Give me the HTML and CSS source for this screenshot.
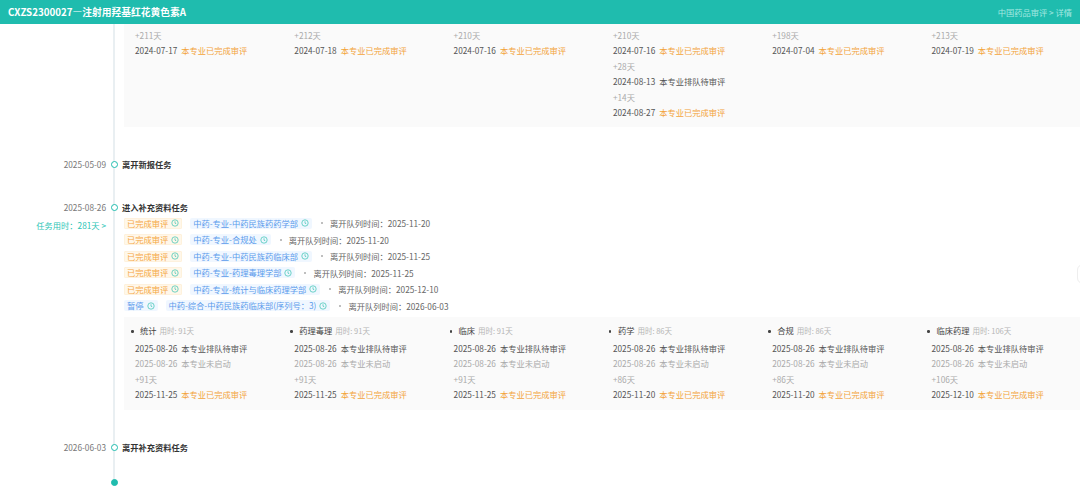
FILE: index.html
```html
<!DOCTYPE html>
<html lang="zh-CN">
<head>
    <meta charset="UTF-8">
    <title>CXZS2300027—注射用羟基红花黄色素A</title>
    <link rel="stylesheet" href="styles.css">
</head>
<body>
    <div class="header">
        <span class="headerTitle">CXZS2300027—注射用羟基红花黄色素A</span>
        <span class="headerNav">中国药品审评 &gt; 详情</span>
    </div>

    <div class="timeline">
        <div class="row">
            <div class="side"></div>
            <div class="main">
                <div class="panel panelTop">
                    <div class="col">
                        <div class="line muted">+211天</div>
                        <div class="line">2024-07-17<span class="state done">本专业已完成审评</span></div>
                    </div>
                    <div class="col">
                        <div class="line muted">+212天</div>
                        <div class="line">2024-07-18<span class="state done">本专业已完成审评</span></div>
                    </div>
                    <div class="col">
                        <div class="line muted">+210天</div>
                        <div class="line">2024-07-16<span class="state done">本专业已完成审评</span></div>
                    </div>
                    <div class="col">
                        <div class="line muted">+210天</div>
                        <div class="line">2024-07-16<span class="state done">本专业已完成审评</span></div>
                        <div class="line muted">+28天</div>
                        <div class="line">2024-08-13<span class="state">本专业排队待审评</span></div>
                        <div class="line muted">+14天</div>
                        <div class="line">2024-08-27<span class="state done">本专业已完成审评</span></div>
                    </div>
                    <div class="col">
                        <div class="line muted">+198天</div>
                        <div class="line">2024-07-04<span class="state done">本专业已完成审评</span></div>
                    </div>
                    <div class="col">
                        <div class="line muted">+213天</div>
                        <div class="line">2024-07-19<span class="state done">本专业已完成审评</span></div>
                    </div>
                </div>
            </div>
        </div>

        <div class="row event eventFirst">
            <div class="side">2025-05-09</div>
            <div class="main"><span class="dot"></span><b>离开新报任务</b></div>
        </div>

        <div class="row event eventSecond">
            <div class="side">2025-08-26</div>
            <div class="main"><span class="dot"></span><b>进入补充资料任务</b></div>
        </div>

        <div class="row">
            <div class="side usedTime">任务用时：281天 &gt;</div>
            <div class="main">
                <div class="tagRow">
                    <span class="tag orange">已完成审评<svg class="clock" viewBox="0 0 12 12"><circle cx="6" cy="6" r="4.8"/><path d="M6 3.4V6.3L7.9 7.2"/></svg></span>
                    <span class="tag blue">中药-专业-中药民族药药学部<svg class="clock" viewBox="0 0 12 12"><circle cx="6" cy="6" r="4.8"/><path d="M6 3.4V6.3L7.9 7.2"/></svg></span>
                    <span class="sep"></span><span class="leave">离开队列时间：2025-11-20</span>
                </div>
                <div class="tagRow">
                    <span class="tag orange">已完成审评<svg class="clock" viewBox="0 0 12 12"><circle cx="6" cy="6" r="4.8"/><path d="M6 3.4V6.3L7.9 7.2"/></svg></span>
                    <span class="tag blue">中药-专业-合规处<svg class="clock" viewBox="0 0 12 12"><circle cx="6" cy="6" r="4.8"/><path d="M6 3.4V6.3L7.9 7.2"/></svg></span>
                    <span class="sep"></span><span class="leave">离开队列时间：2025-11-20</span>
                </div>
                <div class="tagRow">
                    <span class="tag orange">已完成审评<svg class="clock" viewBox="0 0 12 12"><circle cx="6" cy="6" r="4.8"/><path d="M6 3.4V6.3L7.9 7.2"/></svg></span>
                    <span class="tag blue">中药-专业-中药民族药临床部<svg class="clock" viewBox="0 0 12 12"><circle cx="6" cy="6" r="4.8"/><path d="M6 3.4V6.3L7.9 7.2"/></svg></span>
                    <span class="sep"></span><span class="leave">离开队列时间：2025-11-25</span>
                </div>
                <div class="tagRow">
                    <span class="tag orange">已完成审评<svg class="clock" viewBox="0 0 12 12"><circle cx="6" cy="6" r="4.8"/><path d="M6 3.4V6.3L7.9 7.2"/></svg></span>
                    <span class="tag blue">中药-专业-药理毒理学部<svg class="clock" viewBox="0 0 12 12"><circle cx="6" cy="6" r="4.8"/><path d="M6 3.4V6.3L7.9 7.2"/></svg></span>
                    <span class="sep"></span><span class="leave">离开队列时间：2025-11-25</span>
                </div>
                <div class="tagRow">
                    <span class="tag orange">已完成审评<svg class="clock" viewBox="0 0 12 12"><circle cx="6" cy="6" r="4.8"/><path d="M6 3.4V6.3L7.9 7.2"/></svg></span>
                    <span class="tag blue">中药-专业-统计与临床药理学部<svg class="clock" viewBox="0 0 12 12"><circle cx="6" cy="6" r="4.8"/><path d="M6 3.4V6.3L7.9 7.2"/></svg></span>
                    <span class="sep"></span><span class="leave">离开队列时间：2025-12-10</span>
                </div>
                <div class="tagRow">
                    <span class="tag blue">暂停<svg class="clock" viewBox="0 0 12 12"><circle cx="6" cy="6" r="4.8"/><path d="M6 3.4V6.3L7.9 7.2"/></svg></span>
                    <span class="tag blue">中药-综合-中药民族药临床部(序列号：3)<svg class="clock" viewBox="0 0 12 12"><circle cx="6" cy="6" r="4.8"/><path d="M6 3.4V6.3L7.9 7.2"/></svg></span>
                    <span class="sep"></span><span class="leave">离开队列时间：2026-06-03</span>
                </div>

                <div class="panel panelBottom">
                    <div class="col">
                        <div class="colTitle"><span class="bullet"></span>统计<small>用时: 91天</small></div>
                        <div class="line">2025-08-26<span class="state">本专业排队待审评</span></div>
                        <div class="line faded">2025-08-26<span class="state">本专业未启动</span></div>
                        <div class="line muted">+91天</div>
                        <div class="line">2025-11-25<span class="state done">本专业已完成审评</span></div>
                    </div>
                    <div class="col">
                        <div class="colTitle"><span class="bullet"></span>药理毒理<small>用时: 91天</small></div>
                        <div class="line">2025-08-26<span class="state">本专业排队待审评</span></div>
                        <div class="line faded">2025-08-26<span class="state">本专业未启动</span></div>
                        <div class="line muted">+91天</div>
                        <div class="line">2025-11-25<span class="state done">本专业已完成审评</span></div>
                    </div>
                    <div class="col">
                        <div class="colTitle"><span class="bullet"></span>临床<small>用时: 91天</small></div>
                        <div class="line">2025-08-26<span class="state">本专业排队待审评</span></div>
                        <div class="line faded">2025-08-26<span class="state">本专业未启动</span></div>
                        <div class="line muted">+91天</div>
                        <div class="line">2025-11-25<span class="state done">本专业已完成审评</span></div>
                    </div>
                    <div class="col">
                        <div class="colTitle"><span class="bullet"></span>药学<small>用时: 86天</small></div>
                        <div class="line">2025-08-26<span class="state">本专业排队待审评</span></div>
                        <div class="line faded">2025-08-26<span class="state">本专业未启动</span></div>
                        <div class="line muted">+86天</div>
                        <div class="line">2025-11-20<span class="state done">本专业已完成审评</span></div>
                    </div>
                    <div class="col">
                        <div class="colTitle"><span class="bullet"></span>合规<small>用时: 86天</small></div>
                        <div class="line">2025-08-26<span class="state">本专业排队待审评</span></div>
                        <div class="line faded">2025-08-26<span class="state">本专业未启动</span></div>
                        <div class="line muted">+86天</div>
                        <div class="line">2025-11-20<span class="state done">本专业已完成审评</span></div>
                    </div>
                    <div class="col">
                        <div class="colTitle"><span class="bullet"></span>临床药理<small>用时: 106天</small></div>
                        <div class="line">2025-08-26<span class="state">本专业排队待审评</span></div>
                        <div class="line faded">2025-08-26<span class="state">本专业未启动</span></div>
                        <div class="line muted">+106天</div>
                        <div class="line">2025-12-10<span class="state done">本专业已完成审评</span></div>
                    </div>
                </div>
            </div>
        </div>

        <div class="row event eventLast">
            <div class="side">2026-06-03</div>
            <div class="main"><span class="dot"></span><b>离开补充资料任务</b></div>
        </div>

        <div class="row endRow">
            <div class="side"></div>
            <div class="main"><span class="dot dotEnd"></span></div>
        </div>
    </div>

    <div class="edgeTab"></div>
</body>
</html>
```

FILE: styles.css
```css
html, body {
    margin: 0;
    padding: 0;
    height: 487px;
    overflow: hidden;
}
body {
    font-family: "Noto Sans CJK SC", "Noto Sans", sans-serif;
    font-size: 8.25px;
    color: #555;
    background: #fff;
}
.header {
    height: 24px;
    padding: 0 8px;
    display: flex;
    justify-content: space-between;
    align-items: center;
    background-color: #1fbcae;
}
.headerTitle {
    font-size: 9.75px;
    font-weight: 700;
    color: #fff;
}
.headerNav {
    font-size: 8.25px;
    color: #a5e8e1;
}
.timeline {
    position: relative;
}
.timeline::before {
    content: "";
    position: absolute;
    left: 113px;
    top: 0;
    height: 457px;
    width: 2px;
    background-color: #e9eff2;
}
.row {
    display: flex;
    position: relative;
}
.side {
    flex: 0 0 106px;
    text-align: right;
    line-height: 16px;
    color: #777;
}
.main {
    position: relative;
    margin-left: 18px;
    flex: 0 0 944px;
    line-height: 16px;
}
.event .main {
    margin-left: 16px;
    flex-basis: 946px;
}
.event b {
    font-weight: 700;
    color: #333;
}
.eventFirst {
    margin-top: 29px;
}
.eventSecond {
    margin-top: 27px;
}
.eventLast {
    margin-top: 29px;
}
.endRow {
    margin-top: 24px;
}
.dot {
    position: absolute;
    left: -11px;
    top: 4.5px;
    width: 7px;
    height: 7px;
    box-sizing: border-box;
    border: 1.5px solid #1fbcae;
    border-radius: 50%;
    background: #fff;
}
.dotEnd {
    top: 0;
    left: -13px;
    background: #1fbcae;
}
.usedTime {
    color: #2cc5b6;
    margin-top: 2px;
}
.panel {
    display: grid;
    grid-template-columns: repeat(6, 159.3px);
    padding-left: 11px;
    background-color: #fafafa;
    overflow: hidden;
}
.panelTop {
    height: 103px;
    box-sizing: border-box;
    padding-top: 3.5px;
}
.panelBottom {
    margin-top: 3px;
    height: 93px;
    box-sizing: border-box;
    padding-top: 5px;
}
.line {
    height: 15.5px;
    line-height: 15.5px;
    white-space: nowrap;
    color: #555;
}
.line.muted {
    color: #aaa;
}
.line.faded, .line.faded .state {
    color: #aaa;
}
.state {
    margin-left: 4px;
    color: #555;
}
.state.done {
    color: #f3a43b;
}
.colTitle {
    position: relative;
    height: 16px;
    line-height: 16px;
    margin-left: 4px;
    margin-bottom: 2.5px;
    white-space: nowrap;
    color: #444;
}
.colTitle small {
    margin-left: 3px;
    font-size: 7.5px;
    color: #b5b5b5;
}
.bullet {
    display: inline-block;
    width: 2.5px;
    height: 2.5px;
    margin: 0 6.5px 1px -8px;
    border-radius: 50%;
    vertical-align: middle;
    background-color: #444;
}
.tagRow {
    display: flex;
    align-items: center;
    height: 16.5px;
    white-space: nowrap;
}
.tag {
    display: inline-flex;
    align-items: center;
    height: 11px;
    padding: 0 3px;
    margin-right: 8px;
    border-radius: 2px;
    line-height: 11px;
}
.tag.orange {
    color: #f5a742;
    background-color: #fff7ea;
    box-shadow: inset 0 0 0 .5px #fdeccf;
}
.tag.blue {
    color: #5b9bec;
    background-color: #f0f7ff;
}
.clock {
    width: 8px;
    height: 8px;
    margin-left: 3px;
    fill: none;
    stroke: #2cc0ae;
    stroke-width: 1;
}
.sep {
    width: 2px;
    height: 2px;
    margin: 0 7px 0 1px;
    border-radius: 50%;
    background-color: #aaa;
}
.leave {
    color: #666;
}
.edgeTab {
    position: absolute;
    right: -9px;
    top: 264px;
    width: 10px;
    height: 18px;
    border: 1px solid #eee;
    border-radius: 6px;
    background: #fff;
}
```
